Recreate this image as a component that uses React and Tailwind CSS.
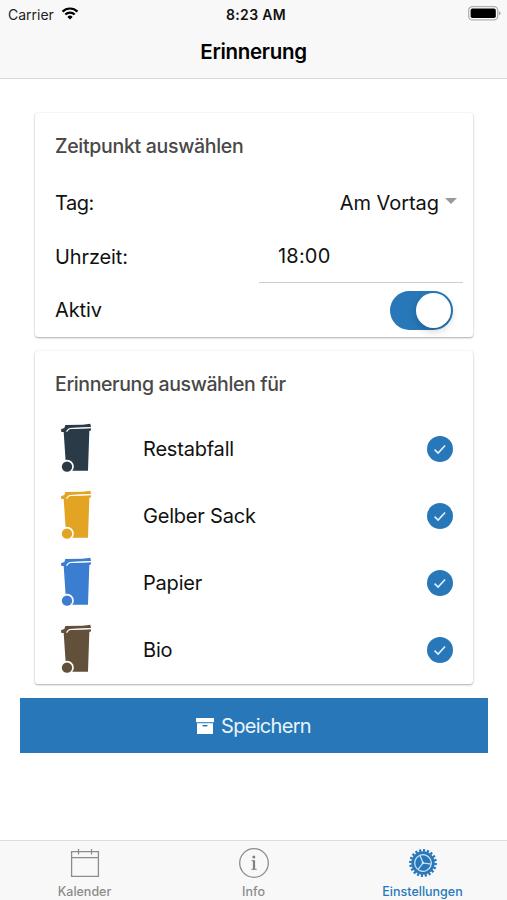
const bins = [
  { name: 'Restabfall', color: '#2b3a47' },
  { name: 'Gelber Sack', color: '#e3a323' },
  { name: 'Papier', color: '#3b7dd0' },
  { name: 'Bio', color: '#63503b' }
];

function WifiIcon() {
  return (
    <svg className="ml-[7px] mb-[2px]" width="18" height="13" viewBox="0 0 17 13" fill="none" stroke="#000" strokeWidth="2.2">
      <path d="M1 4.6a10.6 10.6 0 0 1 15 0" />
      <path d="M3.8 7.5a6.6 6.6 0 0 1 9.4 0" />
      <path d="M8.5 12.6 5.9 9.9a3.7 3.7 0 0 1 5.2 0z" fill="#000" stroke="none" />
    </svg>
  );
}

function BatteryIcon() {
  return (
    <svg width="33" height="15" viewBox="0 0 33 15">
      <rect x="0.7" y="0.7" width="29" height="13.2" rx="3.6" fill="#fff" stroke="#b0b0b0" strokeWidth="1.3" />
      <rect x="2.6" y="2.6" width="25.2" height="9.4" rx="1.8" fill="#000" />
      <path d="M31 5.4c1.2.4 1.6 1.1 1.6 1.9s-.4 1.5-1.6 1.9z" fill="#a3a3a3" />
    </svg>
  );
}

function BinIcon({ color }) {
  return (
    <svg className="mb-[2px]" width="32" height="50" viewBox="0 0 96 150" fill={color}>
      <path d="M16 6 68 5 91 2l2 10-62 3q-9 1-13 12L4 27l-1-8 10-4z" />
      <path d="M11 26h11q3-7 10-8l61-2v6l-5 2-4 119H36L17 116z" />
      <path d="M30 16.5 93 13.8" stroke="#fff" strokeWidth="2.5" />
      <circle cx="21" cy="131" r="20.5" fill="#fff" />
      <circle cx="21" cy="131" r="15.5" />
    </svg>
  );
}

function CheckIcon() {
  return (
    <svg width="26" height="26" viewBox="0 0 26 26" fill="none">
      <circle cx="13" cy="13" r="13" fill="#2878b9" />
      <path d="M7.6 13.7 11.1 17l7-7.5" stroke="#e3f1fb" strokeWidth="1.6" />
    </svg>
  );
}

function ArchiveIcon() {
  return (
    <svg width="18" height="16" viewBox="0 0 18 16" fill="#fff">
      <path d="M0 0h18v4.2H0z" />
      <path fillRule="evenodd" d="M1 5.2h16V16H1zM6.3 7q0 1.6 1.5 1.6h2.4Q11.7 8.6 11.7 7z" />
    </svg>
  );
}

function CalendarIcon() {
  return (
    <svg width="30" height="30" viewBox="0 0 30 30" fill="none" stroke="#8c8c8c" strokeWidth="1.3">
      <path d="M1.6 3.6h26.8v24.8H1.6zM1.6 9.6h26.8M8.5 1v5.5M21.5 1v5.5" />
    </svg>
  );
}

function InfoIcon() {
  return (
    <svg width="32" height="32" viewBox="0 0 32 32" fill="none" stroke="#8c8c8c">
      <circle cx="16" cy="16" r="14.3" strokeWidth="1.3" />
      <circle cx="15.8" cy="10" r="1.5" fill="#808080" stroke="none" />
      <path d="M13.5 13.7h2.8v8.5M13.3 22.3h5.4" stroke="#808080" strokeWidth="1.1" />
      <path d="M16 13.5v9" stroke="#808080" strokeWidth="2.2" />
    </svg>
  );
}

function GearIcon() {
  return (
    <svg width="28" height="28" viewBox="0 0 28 28" fill="none" stroke="#2878b9">
      <circle cx="14" cy="14" r="12.6" strokeWidth="2.6" pathLength="40" strokeDasharray="1.1 0.9" />
      <circle cx="14" cy="14" r="11.7" fill="#2878b9" stroke="none" />
      <g stroke="#d5e6f4" strokeWidth="1.2" transform="rotate(-22 14 14)">
        <circle cx="14" cy="14" r="8.3" />
        <path d="M14 14V5.7M14 14l7.2 4.15M14 14l-7.2 4.15" />
      </g>
      <circle cx="14" cy="14" r="1.3" fill="#d5e6f4" stroke="none" />
    </svg>
  );
}

function Card({ title, titleClass, className, children }) {
  return (
    <section className={`ml-[35px] mr-[34px] rounded-[3px] bg-white shadow-[0_1px_2px_rgba(0,0,0,0.3),0_0_2px_rgba(0,0,0,0.1)] ${className}`}>
      <h2 className={`flex h-[63px] items-center px-5 text-[19.5px] font-medium text-[#484848] ${titleClass}`}>{title}</h2>
      {children}
    </section>
  );
}

function Tab({ icon, label, className }) {
  return (
    <div className={`flex flex-1 flex-col items-center text-[12.5px] font-medium ${className}`}>
      <div className="flex h-[43px] items-center pt-px">{icon}</div>
      <span className="leading-4">{label}</span>
    </div>
  );
}

export default function App() {
  return (
    <div className="flex h-[900px] w-[507px] flex-col overflow-hidden bg-white font-[Inter,'Liberation_Sans',sans-serif] text-[20px] tracking-[-0.12px] text-[#111]">
      <header className="h-[79px] shrink-0 border-b border-[#d8d8d8] bg-[#f8f8f8]">
        <div className="grid h-[27px] grid-cols-3 items-center pl-2 pr-[6px] text-[14px] tracking-normal">
          <div className="flex items-center pt-px text-[#222]"><span>Carrier</span><WifiIcon /></div>
          <div className="pl-[3px] pt-px text-center font-semibold tracking-[0.3px]">8:23 AM</div>
          <div className="flex justify-end"><BatteryIcon /></div>
        </div>
        <h1 className="flex h-[50px] items-center justify-center pt-px text-[20.5px] font-semibold tracking-[-0.3px] text-black">Erinnerung</h1>
      </header>

      <main className="flex-1">
        <Card title="Zeitpunkt auswählen" titleClass="pt-[5px] tracking-[-0.3px]" className="mt-[34px] h-[224px]">
          <div className="flex h-[54px] items-center justify-between pl-5 pr-4">
            <span className="tracking-[-0.5px]">Tag:</span>
            <div className="flex items-center gap-[6px]">
              <span className="tracking-[-0.05px]">Am Vortag</span>
              <svg className="mb-1" width="12" height="6" viewBox="0 0 12 6" fill="#999">
                <path d="M0 0h12L6 6z" />
              </svg>
            </div>
          </div>
          <div className="flex h-[53px] items-center justify-between pl-5 pr-[10px]">
            <span>Uhrzeit:</span>
            <div className="flex h-full w-[204px] items-center border-b border-[#cfcfcf] pl-[19px] tracking-[0.2px]">18:00</div>
          </div>
          <div className="flex h-[54px] items-center justify-between pl-5 pr-5">
            <span>Aktiv</span>
            <div className="flex h-[39px] w-[63px] items-center justify-end rounded-full bg-[#2878b9] p-[2px]">
              <div className="size-[35px] rounded-full bg-white shadow-[0_3px_8px_rgba(0,0,0,0.2)]" />
            </div>
          </div>
        </Card>

        <Card title="Erinnerung auswählen für" titleClass="pt-[3px] tracking-[-0.38px]" className="mt-[14px] h-[333px] pt-px">
          {bins.map((bin) => (
            <div key={bin.name} className="flex h-[67.2px] items-center pl-[25px] pr-5">
              <BinIcon color={bin.color} />
              <span className="ml-[51px] flex-1 tracking-[-0.2px]">{bin.name}</span>
              <CheckIcon />
            </div>
          ))}
        </Card>

        <button className="ml-[20px] mt-[14px] flex h-[55px] w-[468px] items-center justify-center gap-[7px] bg-[#2878b9] pr-px pt-px tracking-[-0.7px] text-[#eaf4fc]">
          <ArchiveIcon />
          Speichern
        </button>
      </main>

      <nav className="flex h-[60px] shrink-0 border-t border-[#dcdcdc] bg-[#f8f8f8] tracking-normal">
        <Tab icon={<CalendarIcon />} label="Kalender" className="text-[#8c8c8c]" />
        <Tab icon={<InfoIcon />} label="Info" className="text-[#8c8c8c]" />
        <Tab icon={<GearIcon />} label="Einstellungen" className="text-[#2878b9]" />
      </nav>
    </div>
  );
}
